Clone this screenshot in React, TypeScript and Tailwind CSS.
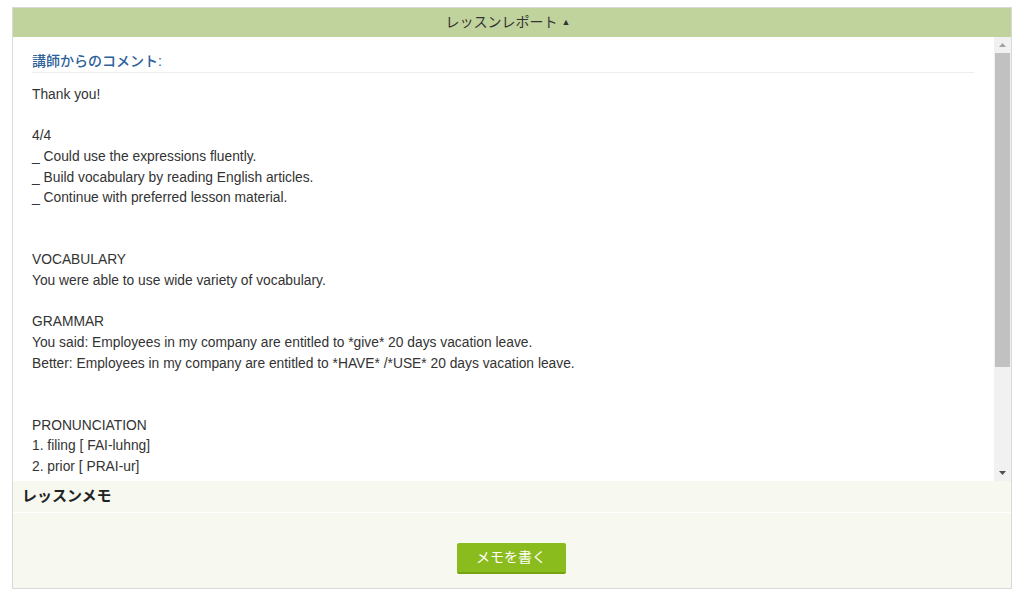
import React from "react";

const lines: string[] = [
  "Thank you!",
  "",
  "4/4",
  "_ Could use the expressions fluently.",
  "_ Build vocabulary by reading English articles.",
  "_ Continue with preferred lesson material.",
  "",
  "",
  "VOCABULARY",
  "You were able to use wide variety of vocabulary.",
  "",
  "GRAMMAR",
  "You said: Employees in my company are entitled to *give* 20 days vacation leave.",
  "Better: Employees in my company are entitled to *HAVE* /*USE* 20 days vacation leave.",
  "",
  "",
  "PRONUNCIATION",
  "1. filing [ FAI-luhng]",
  "2. prior [ PRAI-ur]",
];

const Scrollbar: React.FC = () => (
  <div className="flex w-[17px] flex-col bg-[#f1f1f1]">
    <div className="flex h-[16px] items-center justify-center">
      <svg width="7" height="4" viewBox="0 0 7 4">
        <path d="M0 4 L3.5 0 L7 4 Z" fill="#a3a3a3" />
      </svg>
    </div>
    <div className="mx-[1px] h-[314px] bg-[#c1c1c1]" />
    <div className="flex-1" />
    <div className="flex h-[16px] items-center justify-center">
      <svg width="7" height="4" viewBox="0 0 7 4">
        <path d="M0 0 L3.5 4 L7 0 Z" fill="#505050" />
      </svg>
    </div>
  </div>
);

export default function App() {
  return (
    <div
      className="min-h-[595px] bg-white pl-3 pt-[7px]"
      style={{ fontFamily: '"Liberation Sans", "Noto Sans CJK JP", Arial, sans-serif' }}
    >
      <div className="w-[1000px] border border-[#d9d9d9]">
        <div className="flex h-[29px] items-center justify-center gap-1 bg-[#c1d39d] pr-2 text-[14px] text-[#333]">
          <span>レッスンレポート</span>
          <span className="text-[9px]">▲</span>
        </div>

        <div className="flex h-[444px] bg-white">
          <div className="flex-1 overflow-hidden pl-[19px] pr-5 pt-[14px]">
            <h3 className="border-b border-[#eeeeee] pb-[1px] text-[14px] font-medium leading-[20px] text-[#2c6099]">
              講師からのコメント:
            </h3>
            <div className="mt-[12px] text-[13.8px] leading-[20.67px] text-[#333]">
              {lines.map((line, i) => (
                <div key={i} className="h-[20.67px] whitespace-pre">
                  {line}
                </div>
              ))}
            </div>
          </div>
          <Scrollbar />
        </div>

        <div className="bg-[#f7f9f1]">
          <div className="flex h-[32px] items-center border-b border-white px-[9px] text-[15px] font-bold text-[#222]">
            レッスンメモ
          </div>
          <div className="flex justify-center pb-[14px] pt-[30px]">
            <button className="mr-[2px] h-[31px] w-[109px] rounded-[2px] border-b-2 border-[#75a314] bg-[#8bbc1e] text-[14px] text-white">
              メモを書く
            </button>
          </div>
        </div>
      </div>
    </div>
  );
}
